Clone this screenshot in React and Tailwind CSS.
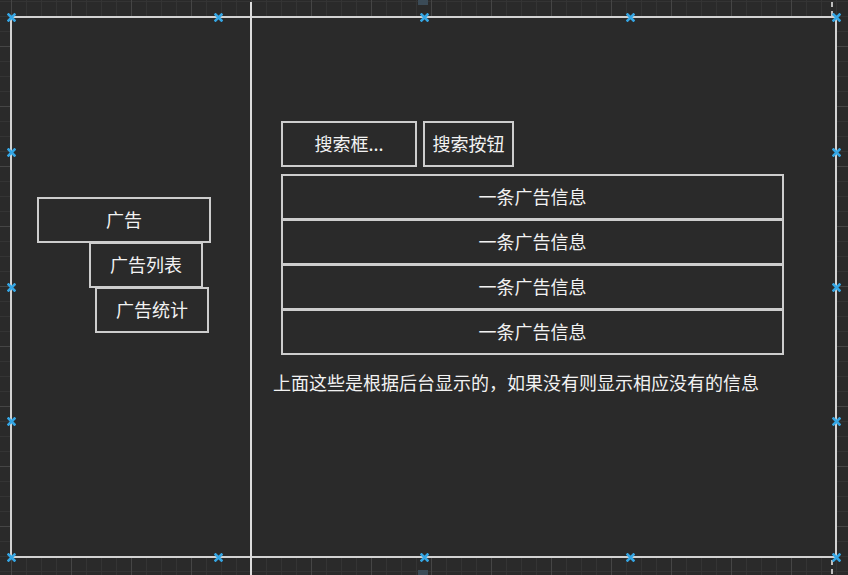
const grid =
  'bg-[#2a2a2a] bg-[image:linear-gradient(to_right,#454545_1px,transparent_1px),linear-gradient(to_bottom,#454545_1px,transparent_1px),linear-gradient(to_right,#343434_1px,transparent_1px),linear-gradient(to_bottom,#343434_1px,transparent_1px)] bg-[size:60px_60px,60px_60px,15px_15px,15px_15px] bg-[position:11px_46px,11px_46px,11px_1px,11px_1px]'

const handles = [
  [11, 17], [218, 17], [424, 17], [630, 17], [836, 17],
  [11, 557], [218, 557], [424, 557], [630, 557], [836, 557],
  [11, 152], [11, 287], [11, 421],
  [836, 152], [836, 287], [836, 421],
]

function Handle({ x, y }) {
  return (
    <svg className="absolute" width="9" height="9" viewBox="0 0 9 9" style={{ left: x - 4.5, top: y - 4.5 }}>
      <path d="M1.5 1.5L7.5 7.5M7.5 1.5L1.5 7.5" stroke="#35a6e4" strokeWidth="2.6" strokeLinecap="square" />
    </svg>
  )
}

const box = 'border-2 border-[#cdcdcd] flex items-center justify-center pb-[3px]'

export default function App() {
  const rows = ['一条广告信息', '一条广告信息', '一条广告信息', '一条广告信息']
  return (
    <div
      className={`relative w-[848px] h-[575px] overflow-hidden text-[18px] leading-6 text-[#f2f2f2] ${grid}`}
      style={{ fontFamily: '"Noto Sans CJK SC", "Noto Sans", sans-serif' }}
    >
      <div className="pt-[16px] pl-[10px]">
        <div className="flex w-[827px] h-[542px] border-2 border-[#d2d2d2] bg-[#2a2a2a]">
          {/* side menu */}
          <div className="w-[238px] pt-[179px] pl-[25px]">
            <div className={`${box} w-[174px] h-[46px]`}>广告</div>
            <div className={`${box} w-[114px] h-[46px] -mt-px ml-[52px]`}>广告列表</div>
            <div className={`${box} w-[114px] h-[46px] -mt-px ml-[58px]`}>广告统计</div>
          </div>

          {/* main area */}
          <div className="flex-1 ml-[2px] pt-[103px] pl-[29px]">
            <div className="flex gap-[6px]">
              <div className={`${box} w-[136px] h-[46px]`}>搜索框...</div>
              <div className={`${box} w-[91px] h-[46px]`}>搜索按钮</div>
            </div>
            <div className="mt-[7px] w-[503px]">
              {rows.map((r, i) => (
                <div key={i} className={`${box} h-[46px] ${i ? '-mt-px' : ''}`}>{r}</div>
              ))}
            </div>
            <p className="mt-[15px] -ml-[8px] whitespace-nowrap">上面这些是根据后台显示的，如果没有则显示相应没有的信息</p>
          </div>
        </div>
      </div>

      {/* divider line running past the frame */}
      <div className="absolute left-[250px] top-[2px] bottom-0 w-[2px] bg-[#dcdcdc]" />

      {/* guide marks */}
      <div className="absolute left-[831px] top-[2px] w-[2px] h-[14px] bg-[repeating-linear-gradient(to_bottom,#bdbdbd_0_5px,transparent_5px_9px)]" />
      <div className="absolute left-[831px] top-[560px] w-[2px] h-[15px] bg-[repeating-linear-gradient(to_bottom,#bdbdbd_0_5px,transparent_5px_9px)]" />
      <div className="absolute left-[418px] top-0 w-[10px] h-[5px] bg-[#3b4b57]" />
      <div className="absolute left-[418px] top-[570px] w-[10px] h-[5px] bg-[#3b4b57]" />

      {handles.map(([x, y], i) => (
        <Handle key={i} x={x} y={y} />
      ))}
    </div>
  )
}
